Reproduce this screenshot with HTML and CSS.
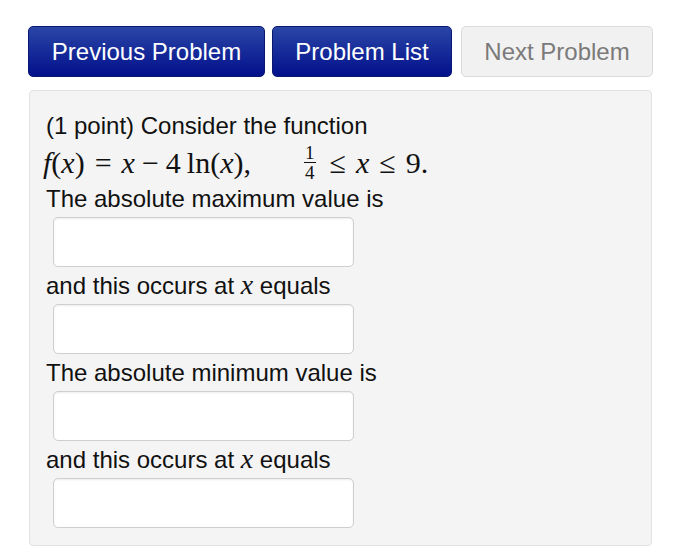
FILE: index.html
```html
<html><head>
  <title>Problem</title>
  <meta charset="UTF-8">
  <meta name="viewport" content="width=device-width, initial-scale=1">
  <link rel="stylesheet" href="styles.css">
</head>
<body>
  <div class="nav">
    <button class="btn">Previous Problem</button>
    <button class="btn list">Problem List</button>
    <button class="btn off" disabled>Next Problem</button>
  </div>
  <div class="problem">
    <div class="line first">(1 point) Consider the function</div>
    <div class="math"><i>f</i>(<i>x</i>)<span class="rel">=</span><i>x</i><span class="bin">&minus;</span>4<span class="th"></span>ln(<i>x</i>),<span class="sp"></span><span class="frac"><span class="num">1</span><span class="den">4</span></span><span class="rel">&le;</span><i>x</i><span class="rel">&le;</span>9.</div>
    <div class="line">The absolute maximum value is</div>
    <input class="ans" type="text">
    <div class="line">and this occurs at <i class="mx">x</i> equals</div>
    <input class="ans" type="text">
    <div class="line">The absolute minimum value is</div>
    <input class="ans" type="text">
    <div class="line">and this occurs at <i class="mx">x</i> equals</div>
    <input class="ans" type="text">
  </div>
</body></html>
```

FILE: styles.css
```css
body {
  margin: 0;
  background: #fff;
  font-family: "Liberation Sans", Arial, sans-serif;
  color: #111;
}
.nav {
  display: flex;
  padding: 26px 0 0 28px;
}
.btn {
  height: 51px;
  width: 237px;
  padding: 0;
  font-family: "Liberation Sans", Arial, sans-serif;
  font-size: 24px;
  color: #fff;
  background: linear-gradient(#2a46a6, #02108c);
  border: 1px solid #0a1870;
  border-radius: 5px;
}
.btn.list {
  width: 180px;
  margin-left: 7px;
}
.btn.off {
  width: 192px;
  margin-left: 9px;
  color: #7a7a7a;
  background: #f1f1f1;
  border: 1px solid #dadada;
}
.problem {
  margin: 13px 0 0 29px;
  width: 623px;
  box-sizing: border-box;
  padding: 21px 16px 11px;
  background: #f4f4f4;
  border: 1px solid #e2e2e2;
  border-radius: 4px;
  font-size: 24px;
}
.line {
  line-height: 26px;
}
.line.first {
  line-height: 28px;
}
.math {
  font-family: "Liberation Serif", "Times New Roman", serif;
  font-size: 30px;
  line-height: 46px;
  height: 46px;
  white-space: nowrap;
  margin-left: -3px;
}
.rel {
  margin: 0 10px;
}
.bin {
  margin: 0 7px;
}
.th {
  display: inline-block;
  width: 6px;
}
.mx {
  font-family: "Liberation Serif", "Times New Roman", serif;
  font-size: 28px;
  line-height: 0;
}
.sp {
  display: inline-block;
  width: 52px;
}
.frac {
  display: inline-block;
  vertical-align: -6px;
  font-size: 19px;
  line-height: 15px;
  text-align: center;
  margin: 0 4px 0 1px;
}
.frac span {
  display: block;
}
.frac .num {
  border-bottom: 1px solid #111;
  padding: 0 1px 2px;
}
.frac .den {
  padding-top: 2px;
}
.ans {
  display: block;
  width: 301px;
  height: 50px;
  margin: 5px 0 6px 7px;
  box-sizing: border-box;
  background: #fff;
  border: 1px solid #cfcfcf;
  border-radius: 5px;
  box-shadow: inset 0 1px 2px rgba(0, 0, 0, 0.08);
}
```
